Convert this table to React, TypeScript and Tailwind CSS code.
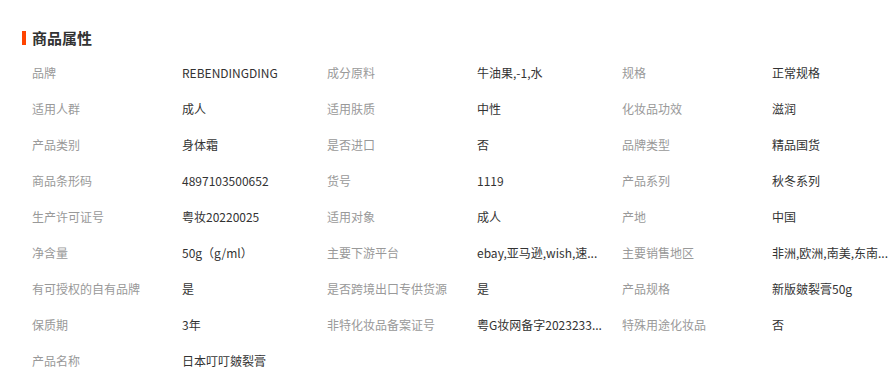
const rows: [string, string][][] = [
  [["品牌", "REBENDINGDING"], ["成分原料", "牛油果,-1,水"], ["规格", "正常规格"]],
  [["适用人群", "成人"], ["适用肤质", "中性"], ["化妆品功效", "滋润"]],
  [["产品类别", "身体霜"], ["是否进口", "否"], ["品牌类型", "精品国货"]],
  [["商品条形码", "4897103500652"], ["货号", "1119"], ["产品系列", "秋冬系列"]],
  [["生产许可证号", "粤妆20220025"], ["适用对象", "成人"], ["产地", "中国"]],
  [["净含量", "50g（g/ml）"], ["主要下游平台", "ebay,亚马逊,wish,速..."], ["主要销售地区", "非洲,欧洲,南美,东南..."]],
  [["有可授权的自有品牌", "是"], ["是否跨境出口专供货源", "是"], ["产品规格", "新版皴裂膏50g"]],
  [["保质期", "3年"], ["非特化妆品备案证号", "粤G妆网备字2023233..."], ["特殊用途化妆品", "否"]],
  [["产品名称", "日本叮叮皴裂膏"]],
]

export default function App() {
  return (
    <div className="w-[894px] h-[377px] overflow-hidden bg-white font-['Noto_Sans_CJK_SC',sans-serif]">
      <div className="flex items-start gap-[6px] pl-[22px] pt-[28px] h-[55px]">
        <span className="mt-[3px] w-[4px] h-[14px] bg-[#ff4400]" />
        <h2 className="text-[15px] leading-[20px] font-bold text-[#333]">商品属性</h2>
      </div>
      <div className="pl-[32px]">
        {rows.map((row, i) => (
          <div key={i} className="flex h-[36px] items-center text-[12px]">
            {row.map(([k, v]) => (
              <div key={k} className="flex w-[295px] shrink-0">
                <span className="w-[150px] shrink-0 text-[#999]">{k}</span>
                <span className="w-[135px] whitespace-nowrap text-[#333]">{v}</span>
              </div>
            ))}
          </div>
        ))}
      </div>
    </div>
  )
}
